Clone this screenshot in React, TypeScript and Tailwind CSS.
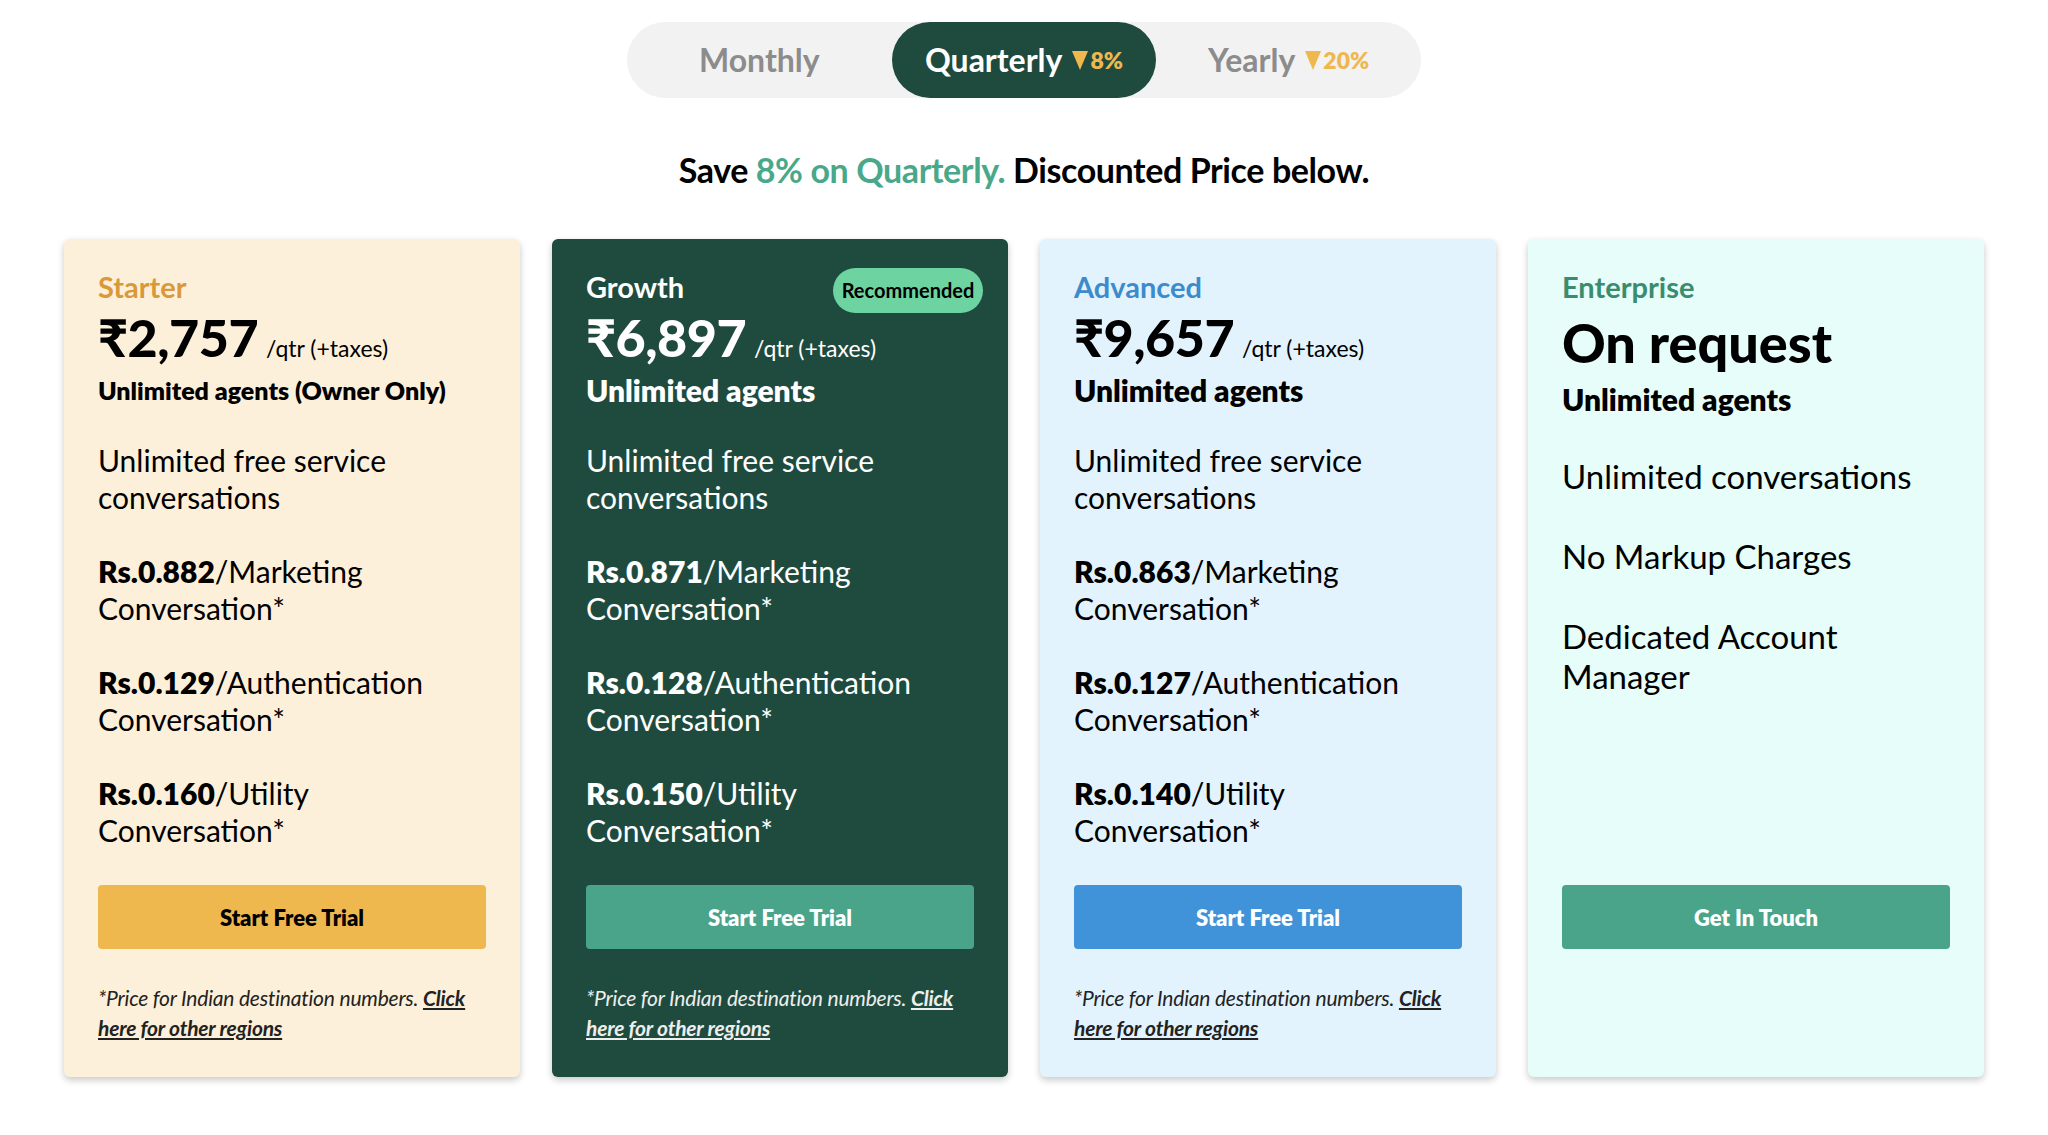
import React from "react";

function Tri() {
  return (
    <svg width="16" height="20" viewBox="0 0 16 20" className="mr-[2px]">
      <polygon points="0,1 16,1 8,20" fill="#efb84f" />
    </svg>
  );
}

type Feat = { b?: string; t1: string; t2: string };

function Footnote({ dark }: { dark?: boolean }) {
  return (
    <p
      className={
        dark
          ? "mt-[34px] h-[60px] text-[21px] italic leading-[30px] text-[#eeeeee] tracking-[-0.2px]"
          : "mt-[34px] h-[60px] text-[21px] italic leading-[30px] text-[#222222] tracking-[-0.2px]"
      }
    >
      *Price for Indian destination numbers.{" "}
      <a className="font-bold underline underline-offset-2">
        Click
        <br />
        here for other regions
      </a>
    </p>
  );
}

function Features({ items, dark }: { items: Feat[]; dark?: boolean }) {
  return (
    <div
      className={
        dark
          ? "mt-[36px] flex flex-1 flex-col gap-[37px] text-[30px] leading-[37px] text-white"
          : "mt-[36px] flex flex-1 flex-col gap-[37px] text-[30px] leading-[37px] text-black"
      }
    >
      {items.map((it, i) => (
        <p key={i} className="whitespace-nowrap">
          {it.b ? <span className="font-extrabold">{it.b}</span> : null}
          {it.t1}
          <br />
          {it.t2}
        </p>
      ))}
    </div>
  );
}

function Price({ value, dark }: { value: string; dark?: boolean }) {
  return (
    <div className={dark ? "mt-[2px] flex h-[60px] items-baseline gap-[8px] text-white" : "mt-[2px] flex h-[60px] items-baseline gap-[8px] text-black"}>
      <span className="text-[52px] font-black leading-[60px] tracking-[-0.5px]">{value}</span>
      <span className="text-[23px] leading-[24px]">/qtr (+taxes)</span>
    </div>
  );
}

const feats = (a: string, b: string, c: string): Feat[] => [
  { t1: "Unlimited free service", t2: "conversations" },
  { b: a, t1: "/Marketing", t2: "Conversation*" },
  { b: b, t1: "/Authentication", t2: "Conversation*" },
  { b: c, t1: "/Utility", t2: "Conversation*" },
];

export default function App() {
  return (
    <div className="min-h-screen w-full bg-white font-['Lato','Noto_Sans',sans-serif] text-black">
      <div className="flex justify-center pt-[22px]">
        <div className="grid h-[76px] w-[794px] grid-cols-3 rounded-full bg-[#f2f2f2]">
          <div className="flex items-center justify-center text-[32px] font-bold text-[#8c8c8c]">Monthly</div>
          <div className="flex items-center justify-center gap-[10px] rounded-full bg-[#1f4a3e] text-[32px] font-bold text-white">
            <span>Quarterly</span>
            <span className="flex items-center text-[23px] font-extrabold text-[#efb84f]">
              <Tri />
              8%
            </span>
          </div>
          <div className="flex items-center justify-center gap-[10px] text-[32px] font-bold text-[#8c8c8c]">
            <span>Yearly</span>
            <span className="flex items-center text-[23px] font-extrabold text-[#efb84f]">
              <Tri />
              20%
            </span>
          </div>
        </div>
      </div>

      <p className="mt-[52px] text-center text-[34px] font-bold leading-[40px] tracking-[-0.4px]">
        Save <span className="text-[#4aa88a]">8% on Quarterly.</span> Discounted Price below.
      </p>

      <div className="mt-[49px] grid grid-cols-4 gap-[32px] px-[64px] pb-[57px]">
        {/* Starter */}
        <div className="flex flex-col rounded-[6px] bg-[#fdf0da] px-[34px] pb-[34px] pt-[30px] shadow-[0_3px_7px_rgba(0,0,0,0.22)]">
          <h3 className="h-[36px] text-[29px] font-bold leading-[36px] text-[#d9993a]">Starter</h3>
          <Price value="₹2,757" />
          <p className="mt-[7px] h-[32px] whitespace-nowrap text-[25px] font-extrabold leading-[32px]">Unlimited agents (Owner Only)</p>
          <Features items={feats("Rs.0.882", "Rs.0.129", "Rs.0.160")} />
          <button className="mt-[36px] h-[64px] w-full rounded-[4px] bg-[#efb84f] text-[22px] font-extrabold text-black">Start Free Trial</button>
          <Footnote />
        </div>

        {/* Growth */}
        <div className="flex flex-col rounded-[6px] bg-[#1f4b3f] px-[34px] pb-[34px] pt-[30px] shadow-[0_3px_7px_rgba(0,0,0,0.22)]">
          <div className="flex h-[36px] items-center justify-between">
            <h3 className="text-[29px] font-bold leading-[36px] text-white">Growth</h3>
            <span className="-mr-[9px] mt-[6px] flex h-[45px] w-[150px] shrink-0 items-center justify-center rounded-full bg-[#6dd4a1] text-[20px] font-bold text-black">
              Recommended
            </span>
          </div>
          <Price value="₹6,897" dark />
          <p className="mt-[7px] h-[32px] text-[30px] font-extrabold leading-[32px] text-white">Unlimited agents</p>
          <Features items={feats("Rs.0.871", "Rs.0.128", "Rs.0.150")} dark />
          <button className="mt-[36px] h-[64px] w-full rounded-[4px] bg-[#4aa48a] text-[22px] font-extrabold text-white">Start Free Trial</button>
          <Footnote dark />
        </div>

        {/* Advanced */}
        <div className="flex flex-col rounded-[6px] bg-[#e2f3fd] px-[34px] pb-[34px] pt-[30px] shadow-[0_3px_7px_rgba(0,0,0,0.22)]">
          <h3 className="h-[36px] text-[29px] font-bold leading-[36px] text-[#3d8bcb]">Advanced</h3>
          <Price value="₹9,657" />
          <p className="mt-[7px] h-[32px] text-[30px] font-extrabold leading-[32px]">Unlimited agents</p>
          <Features items={feats("Rs.0.863", "Rs.0.127", "Rs.0.140")} />
          <button className="mt-[36px] h-[64px] w-full rounded-[4px] bg-[#4193d9] text-[22px] font-extrabold text-white">Start Free Trial</button>
          <Footnote />
        </div>

        {/* Enterprise */}
        <div className="flex flex-col rounded-[6px] bg-[#e6fdf9] px-[34px] pb-[34px] pt-[30px] shadow-[0_3px_7px_rgba(0,0,0,0.22)]">
          <h3 className="h-[36px] text-[29px] font-bold leading-[36px] text-[#3a8c6f]">Enterprise</h3>
          <p className="mt-[10px] h-[56px] text-[54px] font-black leading-[56px]">On request</p>
          <p className="mt-[12px] h-[32px] text-[30px] font-extrabold leading-[32px]">Unlimited agents</p>
          <div className="mt-[41px] flex flex-1 flex-col gap-[40px] text-[33px] leading-[40px]">
            <p>Unlimited conversations</p>
            <p>No Markup Charges</p>
            <p>
              Dedicated Account
              <br />
              Manager
            </p>
          </div>
          <button className="mt-[36px] h-[64px] w-full rounded-[4px] bg-[#4aa48a] text-[22px] font-extrabold text-white">Get In Touch</button>
          <div className="mt-[34px] h-[60px]" />
        </div>
      </div>
    </div>
  );
}
